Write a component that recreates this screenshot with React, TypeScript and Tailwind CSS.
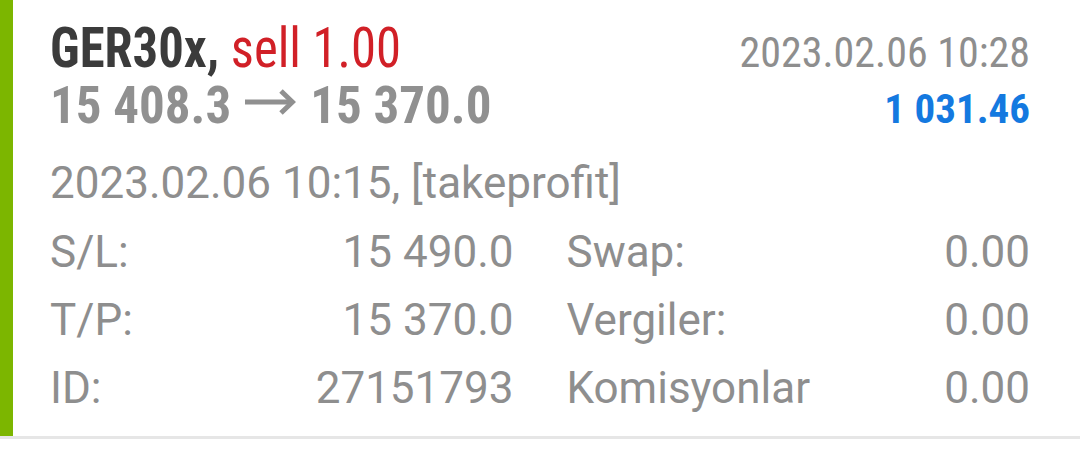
export default function App() {
  return (
    <div className="w-[1080px] h-[449px] bg-white font-['Roboto',sans-serif] overflow-hidden">
      <div className="flex border-b-[3px] border-[#e6e6e6]">
        <div className="w-[13px] shrink-0 bg-[#7cb600]" />
        <div className="flex-1 pl-[37px] pr-[50px] pt-[19px] pb-[14px]">
          <div className="flex h-[58px] justify-between items-baseline text-[56px] leading-[58px] font-stretch-condensed">
            <span className="inline-block origin-left scale-x-[0.905] font-bold text-[#3b3b3b] whitespace-nowrap">
              GER30x, <span className="font-normal text-[#d12027]">sell 1.00</span>
            </span>
            <span className="text-[42px] text-[#8e8e8e]">2023.02.06 10:28</span>
          </div>
          <div className="flex h-[58px] justify-between items-baseline text-[51px] leading-[58px] font-stretch-condensed">
            <span className="font-bold text-[#909090] whitespace-nowrap">
              15 408.3
              <svg className="inline-block mx-[14px] align-[7px]" width="51" height="28" viewBox="0 0 51 28" fill="none" stroke="#909090" strokeWidth="5">
                <path d="M0 14h47" />
                <path d="M36 3l11.5 11L36 25" />
              </svg>
              15 370.0
            </span>
            <span className="text-[41px] font-bold text-[#1479e0]">1 031.46</span>
          </div>
          <div className="mt-[13px] text-[44px] leading-[70px] text-[#8e8e8e]">
            2023.02.06 10:15, [takeprofit]
          </div>
          <div className="grid grid-cols-2 gap-x-[53px] text-[44px] leading-[68px] text-[#8e8e8e]">
            <div className="flex justify-between">
              <span>S/L:</span>
              <span>15 490.0</span>
            </div>
            <div className="flex justify-between">
              <span>Swap:</span>
              <span>0.00</span>
            </div>
            <div className="flex justify-between">
              <span>T/P:</span>
              <span>15 370.0</span>
            </div>
            <div className="flex justify-between">
              <span>Vergiler:</span>
              <span>0.00</span>
            </div>
            <div className="flex justify-between">
              <span>ID:</span>
              <span>27151793</span>
            </div>
            <div className="flex justify-between">
              <span>Komisyonlar</span>
              <span>0.00</span>
            </div>
          </div>
        </div>
      </div>
    </div>
  );
}
